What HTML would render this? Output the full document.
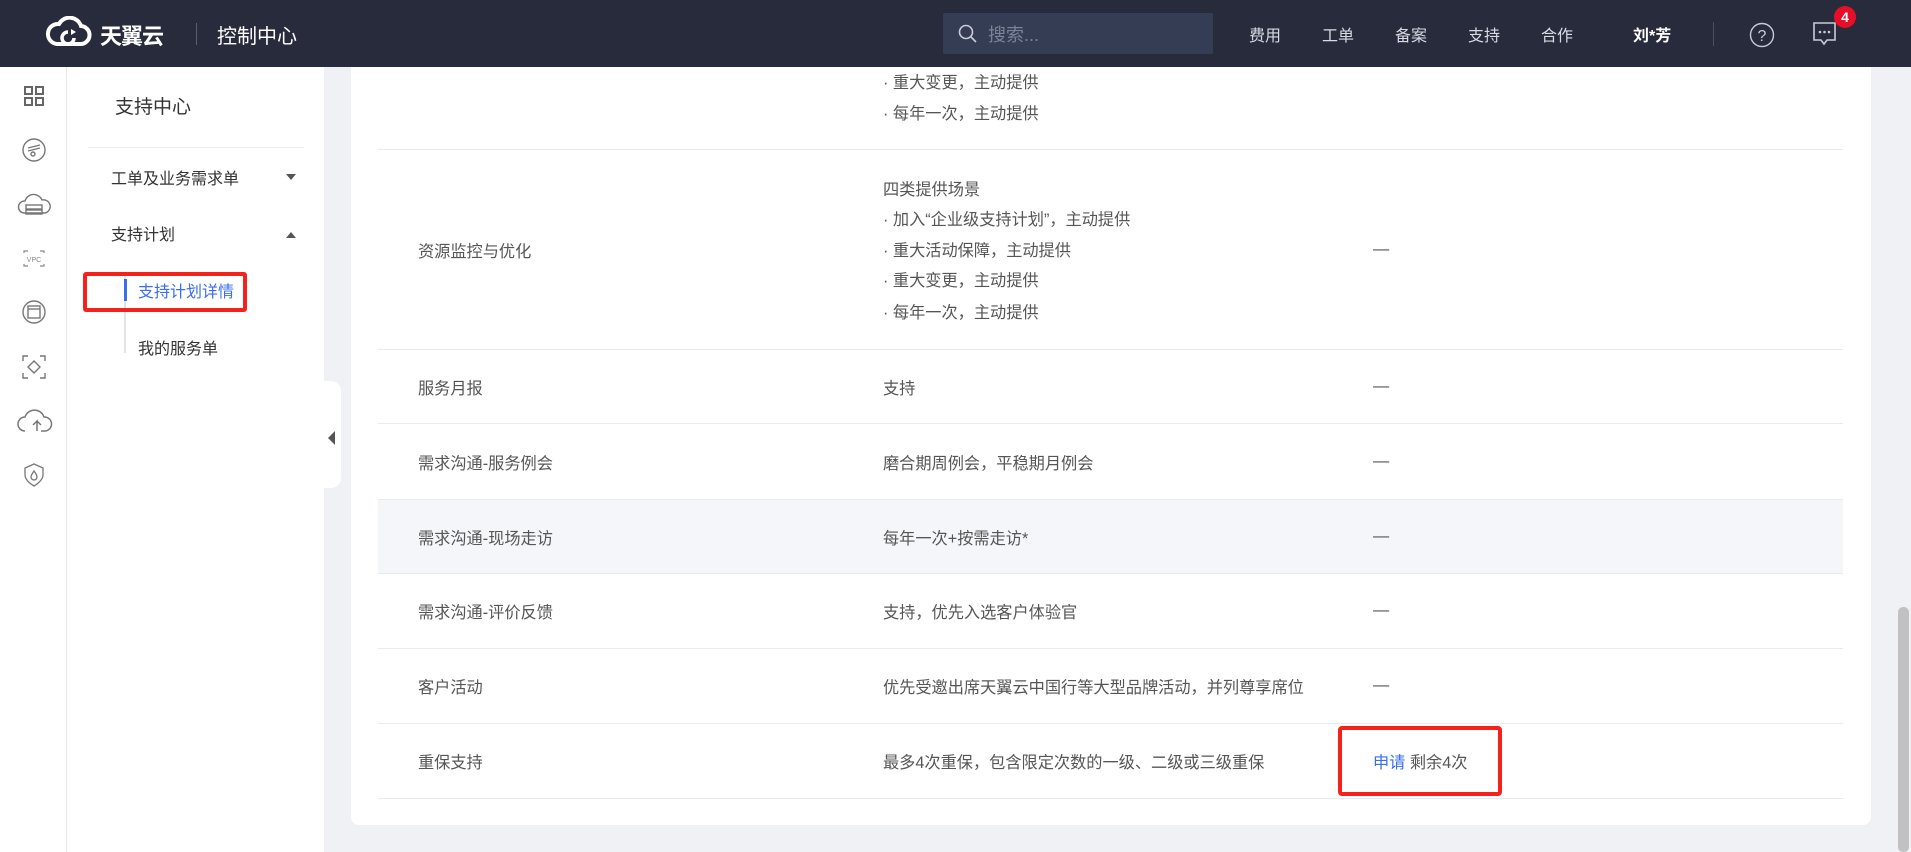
<!DOCTYPE html>
<html><head><meta charset="utf-8"><style>
*{margin:0;padding:0;box-sizing:border-box}
body{width:1911px;height:852px;overflow:hidden;background:#f0f1f5;font-family:"Liberation Sans","Noto Sans CJK SC",sans-serif;position:relative;color:#333}
.abs{position:absolute}
#hdr{left:0;top:0;width:1911px;height:67px;background:#272b3b;color:#fff}
#rail{left:0;top:67px;width:67px;height:785px;background:#fff;border-right:1px solid #e6e8ee}
#side{left:67px;top:67px;width:257px;height:785px;background:#fff}
#card{left:351px;top:67px;width:1520px;height:758px;background:#fff;border-radius:0 0 8px 8px}
.t{position:absolute;font-size:16.2px;color:#555;white-space:nowrap}
.hl{position:absolute;left:378px;width:1465px;height:1px;background:#e8eaf0}
.nav{position:absolute;top:22px;font-size:16px;color:#d8dbe4}
</style></head><body>
<div id="hdr" class="abs">
  <svg class="abs" style="left:44px;top:16px" width="50" height="32" viewBox="0 0 50 32"><path d="M13 28 H36 A9 9 0 0 0 37 10 A12 12 0 0 0 15 8 A10 10 0 0 0 13 28Z" fill="none" stroke="#fff" stroke-width="4"/><path d="M24 16 a6 6 0 1 0 6 6" fill="none" stroke="#fff" stroke-width="3.5"/><path d="M27 13 l5 3 -5 3z" fill="#fff"/></svg>
  <div class="abs" style="left:100px;top:19px;font-size:22px;font-weight:bold;letter-spacing:-1px">天翼云</div>
  <div class="abs" style="left:196px;top:23px;width:1px;height:22px;background:#5a5f70"></div>
  <div class="abs" style="left:217px;top:20px;font-size:20px">控制中心</div>
  <div class="abs" style="left:943px;top:13px;width:270px;height:41px;background:#353d55;border-radius:2px"></div>
  <svg class="abs" style="left:958px;top:24px" width="20" height="20" viewBox="0 0 20 20"><circle cx="8" cy="8" r="6.5" fill="none" stroke="#c8ccd6" stroke-width="1.6"/><path d="M13 13l5 5" stroke="#c8ccd6" stroke-width="1.6"/></svg>
  <div class="abs" style="left:988px;top:21px;font-size:18px;color:#7b8296">搜索...</div>
  <div class="nav" style="left:1249px">费用</div>
  <div class="nav" style="left:1322px">工单</div>
  <div class="nav" style="left:1395px">备案</div>
  <div class="nav" style="left:1468px">支持</div>
  <div class="nav" style="left:1541px">合作</div>
  <div class="nav" style="left:1633px;color:#fff;font-weight:bold">刘*芳</div>
  <div class="abs" style="left:1713px;top:22px;width:1px;height:24px;background:#4a4f60"></div>
  <svg class="abs" style="left:1749px;top:22px" width="26" height="26" viewBox="0 0 26 26"><circle cx="13" cy="13" r="11.5" fill="none" stroke="#c8ccd6" stroke-width="1.4"/><text x="13" y="19" text-anchor="middle" font-size="16" fill="#c8ccd6" font-family="Liberation Sans">?</text></svg>
  <svg class="abs" style="left:1812px;top:21px" width="26" height="28" viewBox="0 0 26 28"><path d="M2 2H23V19H15L12 23 9 19H2Z" fill="none" stroke="#c8ccd6" stroke-width="1.6"/><circle cx="8" cy="11" r="1.3" fill="#c8ccd6"/><circle cx="12.5" cy="11" r="1.3" fill="#c8ccd6"/><circle cx="17" cy="11" r="1.3" fill="#c8ccd6"/></svg>
  <div class="abs" style="left:1834px;top:6px;width:22px;height:22px;border-radius:50%;background:#e60f27;color:#fff;font-size:14px;font-weight:bold;text-align:center;line-height:22px">4</div>
</div>
<div id="rail" class="abs">
  <svg class="abs" style="left:24px;top:19px" width="20" height="20" viewBox="0 0 20 20" fill="none" stroke="#666" stroke-width="2"><rect x="1" y="1" width="7" height="7"/><rect x="12" y="1" width="7" height="7"/><rect x="1" y="12" width="7" height="7"/><rect x="12" y="12" width="7" height="7"/></svg>
  <svg class="abs" style="left:21px;top:70px" width="26" height="26" viewBox="0 0 26 26" fill="none" stroke="#777" stroke-width="1.4"><circle cx="13" cy="13" r="11"/><path d="M7 11l12-3M7 14l12-3"/><circle cx="12" cy="17" r="2"/></svg>
  <svg class="abs" style="left:16px;top:124px" width="36" height="28" viewBox="0 0 36 28" fill="none" stroke="#777" stroke-width="1.4"><path d="M8 22A6 6 0 0 1 9 10 9 9 0 0 1 26 9 6 6 0 0 1 29 22Z"/><rect x="10" y="14" width="16" height="4"/><rect x="10" y="19" width="16" height="4"/></svg>
  <svg class="abs" style="left:17px;top:177px" width="34" height="30" viewBox="0 0 34 30" fill="none" stroke="#888" stroke-width="1.2"><path d="M7 9V7h4M23 7h4v2M7 20v2h4M23 22h4v-2"/><text x="17" y="18" font-size="7" text-anchor="middle" fill="#888" stroke="none">VPC</text></svg>
  <svg class="abs" style="left:21px;top:232px" width="26" height="26" viewBox="0 0 26 26" fill="none" stroke="#777" stroke-width="1.4"><circle cx="13" cy="13" r="11"/><rect x="7" y="7" width="12" height="12"/><path d="M7 10h12"/></svg>
  <svg class="abs" style="left:21px;top:287px" width="26" height="26" viewBox="0 0 26 26" fill="none" stroke="#777" stroke-width="1.4"><path d="M2 7V2h5M19 2h5v5M2 19v5h5M19 24h5v-5M13 7l6 6-6 6-6-6z"/></svg>
  <svg class="abs" style="left:15px;top:340px" width="38" height="28" viewBox="0 0 38 28" fill="none" stroke="#777" stroke-width="1.5"><path d="M10 24A7 7 0 0 1 10 10 10 10 0 0 1 29 10 7 7 0 0 1 30 24H26M22 24V14l-4 4M22 14l4 4"/></svg>
  <svg class="abs" style="left:23px;top:395px" width="22" height="26" viewBox="0 0 22 26" fill="none" stroke="#777" stroke-width="1.3"><path d="M11 2L20 6V13C20 19 11 24 11 24S2 19 2 13V6Z"/><path d="M11 9C9 12 8 13 8 15A3 3 0 0 0 14 15C14 13 13 12 11 9Z"/></svg>
</div>
<div id="side" class="abs">
  <div class="abs" style="left:48px;top:25px;font-size:19px;color:#333">支持中心</div>
  <div class="abs" style="left:21px;top:80px;width:216px;height:1px;background:#e8eaf0"></div>
  <div class="abs" style="left:44px;top:98px;font-size:16px;color:#333">工单及业务需求单</div>
  <div class="abs" style="left:219px;top:107px;border-left:5px solid transparent;border-right:5px solid transparent;border-top:6px solid #555"></div>
  <div class="abs" style="left:44px;top:154px;font-size:16px;color:#333">支持计划</div>
  <div class="abs" style="left:219px;top:165px;border-left:5px solid transparent;border-right:5px solid transparent;border-bottom:6px solid #555"></div>
  <div class="abs" style="left:57px;top:206px;width:2px;height:80px;background:#e0e3ea"></div>
  <div class="abs" style="left:57px;top:212px;width:3px;height:22px;background:#3a6df0"></div>
  <div class="abs" style="left:71px;top:211px;font-size:16px;color:#3a6df0">支持计划详情</div>
  <div class="abs" style="left:71px;top:268px;font-size:16px;color:#333">我的服务单</div>
  <div class="abs" style="left:16px;top:205px;width:164px;height:40px;border:4px solid #f5221b;border-radius:3px"></div>
</div>
<div class="abs" style="left:323px;top:381px;width:18px;height:107px;background:#fff;border-radius:0 10px 10px 0"></div>
<div class="abs" style="left:328px;top:431px;border-top:7px solid transparent;border-bottom:7px solid transparent;border-right:7px solid #555"></div>
<div id="card" class="abs"></div>
<div class="abs" style="left:378px;top:499px;width:1465px;height:74px;background:#f5f6fa"></div>
<div class="hl" style="top:149px"></div><div class="hl" style="top:349px"></div><div class="hl" style="top:423px"></div><div class="hl" style="top:499px"></div><div class="hl" style="top:573px"></div><div class="hl" style="top:648px"></div><div class="hl" style="top:723px"></div><div class="hl" style="top:798px"></div>
<div class="t" style="left:883px;top:69px">· 重大变更，主动提供</div>
<div class="t" style="left:883px;top:100px">· 每年一次，主动提供</div>
<div class="t" style="left:418px;top:238px">资源监控与优化</div>
<div class="t" style="left:883px;top:176px">四类提供场景</div>
<div class="t" style="left:883px;top:206px">· 加入“企业级支持计划”，主动提供</div>
<div class="t" style="left:883px;top:237px">· 重大活动保障，主动提供</div>
<div class="t" style="left:883px;top:267px">· 重大变更，主动提供</div>
<div class="t" style="left:883px;top:299px">· 每年一次，主动提供</div>
<div class="t" style="left:1373px;top:240px">—</div>
<div class="t" style="left:418px;top:375px">服务月报</div><div class="t" style="left:883px;top:375px">支持</div><div class="t" style="left:1373px;top:377px">—</div>
<div class="t" style="left:418px;top:450px">需求沟通-服务例会</div><div class="t" style="left:883px;top:450px">磨合期周例会，平稳期月例会</div><div class="t" style="left:1373px;top:452px">—</div>
<div class="t" style="left:418px;top:525px">需求沟通-现场走访</div><div class="t" style="left:883px;top:525px">每年一次+按需走访*</div><div class="t" style="left:1373px;top:527px">—</div>
<div class="t" style="left:418px;top:599px">需求沟通-评价反馈</div><div class="t" style="left:883px;top:599px">支持，优先入选客户体验官</div><div class="t" style="left:1373px;top:601px">—</div>
<div class="t" style="left:418px;top:674px">客户活动</div><div class="t" style="left:883px;top:674px">优先受邀出席天翼云中国行等大型品牌活动，并列尊享席位</div><div class="t" style="left:1373px;top:676px">—</div>
<div class="t" style="left:418px;top:749px">重保支持</div><div class="t" style="left:883px;top:749px">最多4次重保，包含限定次数的一级、二级或三级重保</div>
<div class="t" style="left:1373px;top:749px"><span style="color:#3a6df0">申请</span> 剩余4次</div>
<div class="abs" style="left:1338px;top:726px;width:164px;height:70px;border:4px solid #f5221b;border-radius:4px"></div>
<div class="abs" style="left:1898px;top:607px;width:11px;height:245px;background:#c1c1c1;border-radius:5px"></div>
</body></html>
